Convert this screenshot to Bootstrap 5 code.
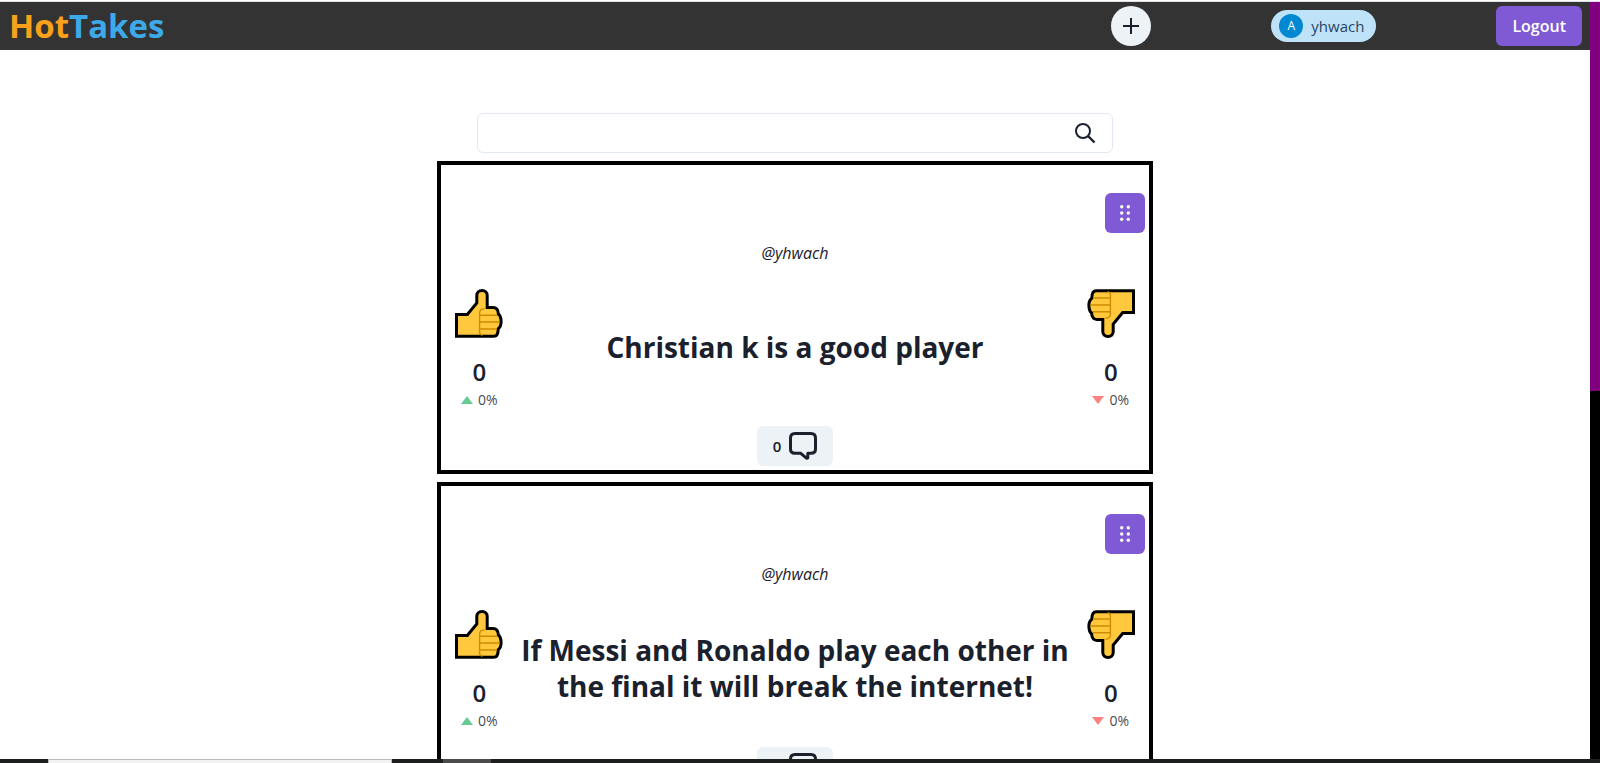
<!DOCTYPE html>
<html lang="en">
<head>
<meta charset="utf-8">
<meta name="viewport" content="width=device-width, initial-scale=1">
<title>HotTakes</title>
<link href="https://cdn.jsdelivr.net/npm/bootstrap@5.3.0/dist/css/bootstrap.min.css" rel="stylesheet">
<style>
  body { font-family: "Open Sans", "Noto Sans", sans-serif; color: #1a202c; line-height: 24px; }
  .window-edge { height: 2px; border-bottom: 1px solid #dfe1e5; }
  .topbar { background: #333; height: 48px; padding: 0 8px 0 9px; }
  .brand { font-size: 33px; line-height: 48px; font-weight: 700; color: #f9a11b; }
  .brand span { color: #3da9e8; }
  .top-actions { gap: 120px; }
  .ht-btn { border: 0; border-radius: 6px; height: 40px; font-weight: 600; font-size: 16px; }
  .ht-purple { background: #805ad5; color: #fff; }
  .ht-soft { background: #edf2f7; color: #1a202c; }
  .ht-square { width: 40px; padding: 0; }
  .ht-round { border-radius: 50%; }
  .user-tag { background: #bee3f8; color: #2a4365; height: 32px; padding: 0 12px 0 8px; font-weight: 500; font-size: 15px; }
  .initial { width: 24px; height: 24px; background: #0088d1; color: #fff; font-size: 12px; }
  .search-wrap { width: 40%; height: 40px; margin-top: 63px; border: 1px solid #e2e8f0; border-radius: 6px; padding-right: 16px; }
  .search-wrap input { border: 0; outline: 0; background: transparent; padding: 0 16px; min-width: 0; }
  .take { width: 45%; height: 313px; margin-top: 8px; border: 4px solid #000; padding: 28px 4px 4px; }
  .handle { font-style: italic; font-size: 16px; margin-top: 8px; }
  .take-row { padding: 0 10px; margin-top: 24px; }
  .take-title { font-size: 28px; line-height: 36px; font-weight: 700; margin: 0; padding: 0 8px 6px; }
  .votes { width: 48px; }
  .count { font-size: 24px; line-height: 36px; font-weight: 600; margin-top: 15px; }
  .share { font-size: 14px; line-height: 20px; color: #4a4d55; gap: 5px; }
  .comment-btn { padding: 0 16px; gap: 8px; font-size: 15px; }
  .scroll-track { width: 10px; background: #000; }
  .scroll-thumb { height: 389px; background: #800080; }
  .taskbar { height: 4px; background: #1c1f1e; }
  .task-search { width: 344px; margin-left: 48px; background: #f2f2f2; border: 1px solid #bbb; border-bottom: 0; }
  .task-item { width: 48px; margin-left: 51px; background: #4b4b4b; }
</style>
</head>
<body class="bg-white">
<svg class="d-none" aria-hidden="true">
  <symbol id="thumb" viewBox="0 0 48 50">
    <path d="M1.5 25.5H12.3L21.8 14V6.5C21.8 3.5 24 1.6 27 1.6S32.2 3.5 32.2 6.5V18.6H38C41.5 18.6 43.2 21.3 43.4 25C45.2 26.5 46.1 28.8 46.1 32.8S44.8 38.7 43.2 39.8C43.2 44.5 41.4 47.3 38.8 47.3H1.5Z" fill="#ffc83d" stroke="#000" stroke-width="3"/>
    <path d="M29.5 19.7C26 20 24.6 21.5 24.6 24V43.5Q24.6 45.5 27.5 46.2M25 26.3H42M25 33H44.5M25 40H42" fill="none" stroke="#d08c00" stroke-width="1.4"/>
  </symbol>
  <symbol id="grip" viewBox="0 0 10 16">
    <g fill="#fff"><circle cx="1.7" cy="1.7" r="1.7"/><circle cx="8.3" cy="1.7" r="1.7"/><circle cx="1.7" cy="8" r="1.7"/><circle cx="8.3" cy="8" r="1.7"/><circle cx="1.7" cy="14.3" r="1.7"/><circle cx="8.3" cy="14.3" r="1.7"/></g>
  </symbol>
  <symbol id="bubble" viewBox="0 0 28 28">
    <path d="M6 1.5H22Q26.5 1.5 26.5 6V17Q26.5 21.3 22 21.3H18.8V26L17.4 26.2L11.8 21.3H6Q1.5 21.3 1.5 17V6Q1.5 1.5 6 1.5Z" fill="none" stroke="#1a202c" stroke-width="3" stroke-linejoin="round"/>
  </symbol>
  <symbol id="up" viewBox="0 0 12 8"><path d="M0 8L6 0L12 8Z" fill="#68c994"/></symbol>
  <symbol id="down" viewBox="0 0 12 8"><path d="M0 0H12L6 8Z" fill="#fc8181"/></symbol>
</svg>
<div class="d-flex flex-column vh-100 overflow-hidden">
  <div class="window-edge flex-shrink-0"></div>
  <div class="d-flex flex-grow-1 overflow-hidden">
    <div class="flex-grow-1 overflow-hidden">
      <header class="topbar d-flex align-items-center">
        <a href="#" class="brand text-decoration-none">Hot<span>Takes</span></a>
        <div class="top-actions d-flex align-items-center ms-auto">
          <button type="button" class="ht-btn ht-soft ht-square ht-round d-flex align-items-center justify-content-center" aria-label="New take">
            <svg width="16" height="16" viewBox="0 0 16 16"><path d="M8 0V16M0 8H16" stroke="#1a202c" stroke-width="2"/></svg>
          </button>
          <div class="user-tag d-flex align-items-center gap-2 rounded-pill">
            <span class="initial rounded-circle d-flex align-items-center justify-content-center">A</span>
            <span>yhwach</span>
          </div>
          <button type="button" class="ht-btn ht-purple px-3">Logout</button>
        </div>
      </header>
      <main class="d-flex flex-column align-items-center">
        <div class="search-wrap d-flex align-items-center flex-shrink-0">
          <input type="search" class="flex-grow-1" aria-label="Search takes">
          <svg width="22" height="22" viewBox="0 0 22 22"><circle cx="9" cy="9" r="7" fill="none" stroke="#1a202c" stroke-width="2"/><path d="M14 14L20.5 20.5" stroke="#1a202c" stroke-width="2.4"/></svg>
        </div>
        <article class="take d-flex flex-column flex-shrink-0">
          <button type="button" class="ht-btn ht-purple ht-square align-self-end d-flex align-items-center justify-content-center flex-shrink-0" aria-label="Options"><svg width="10" height="16"><use href="#grip"/></svg></button>
          <div class="handle text-center">@yhwach</div>
          <div class="take-row d-flex align-items-center">
            <div class="votes d-flex flex-column align-items-center flex-shrink-0">
              <svg width="48" height="50"><use href="#thumb"/></svg>
              <div class="count">0</div>
              <div class="share d-flex align-items-center"><svg width="12" height="8"><use href="#up"/></svg>0%</div>
            </div>
            <h2 class="take-title flex-grow-1 text-center">Christian k is a good player</h2>
            <div class="votes d-flex flex-column align-items-center flex-shrink-0">
              <svg width="48" height="50" viewBox="0 0 48 50"><use href="#thumb" width="48" height="50" transform="rotate(180 24 24.5)"/></svg>
              <div class="count">0</div>
              <div class="share d-flex align-items-center"><svg width="12" height="8"><use href="#down"/></svg>0%</div>
            </div>
          </div>
          <button type="button" class="ht-btn ht-soft comment-btn align-self-center mt-auto d-flex align-items-center flex-shrink-0">0<svg width="28" height="28"><use href="#bubble"/></svg></button>
        </article>
        <article class="take d-flex flex-column flex-shrink-0">
          <button type="button" class="ht-btn ht-purple ht-square align-self-end d-flex align-items-center justify-content-center flex-shrink-0" aria-label="Options"><svg width="10" height="16"><use href="#grip"/></svg></button>
          <div class="handle text-center">@yhwach</div>
          <div class="take-row d-flex align-items-center">
            <div class="votes d-flex flex-column align-items-center flex-shrink-0">
              <svg width="48" height="50"><use href="#thumb"/></svg>
              <div class="count">0</div>
              <div class="share d-flex align-items-center"><svg width="12" height="8"><use href="#up"/></svg>0%</div>
            </div>
            <h2 class="take-title flex-grow-1 text-center">If Messi and Ronaldo play each other in the final it will break the internet!</h2>
            <div class="votes d-flex flex-column align-items-center flex-shrink-0">
              <svg width="48" height="50" viewBox="0 0 48 50"><use href="#thumb" width="48" height="50" transform="rotate(180 24 24.5)"/></svg>
              <div class="count">0</div>
              <div class="share d-flex align-items-center"><svg width="12" height="8"><use href="#down"/></svg>0%</div>
            </div>
          </div>
          <button type="button" class="ht-btn ht-soft comment-btn align-self-center mt-auto d-flex align-items-center flex-shrink-0">1<svg width="28" height="28"><use href="#bubble"/></svg></button>
        </article>
      </main>
    </div>
    <div class="scroll-track flex-shrink-0"><div class="scroll-thumb"></div></div>
  </div>
  <div class="taskbar d-flex flex-shrink-0"><div class="task-search"></div><div class="task-item"></div></div>
</div>
<script src="https://cdn.jsdelivr.net/npm/bootstrap@5.3.0/dist/js/bootstrap.bundle.min.js"></script>
</body>
</html>
